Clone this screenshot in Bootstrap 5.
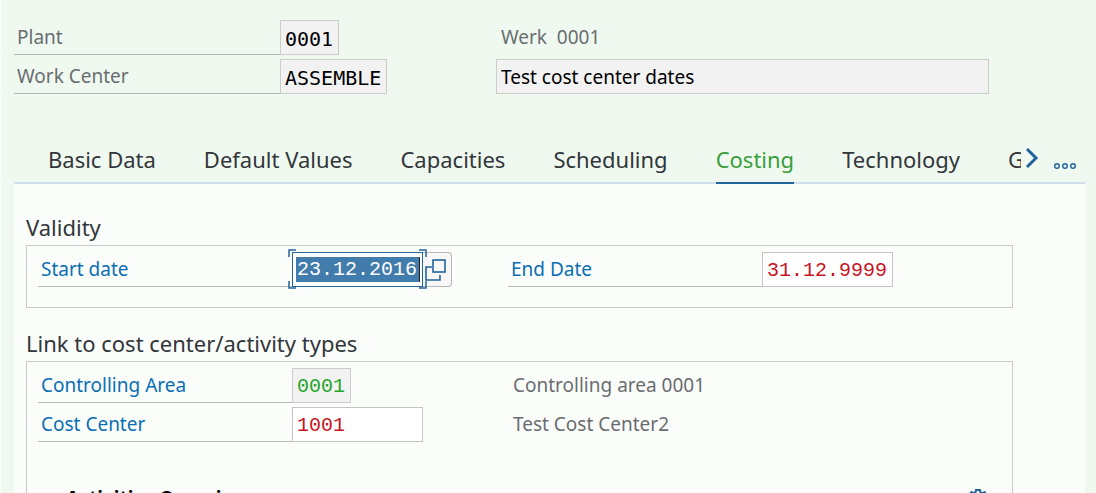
<!DOCTYPE html>
<html lang="en">
<head>
<meta charset="utf-8">
<meta name="viewport" content="width=device-width, initial-scale=1">
<title>Work Center: Costing</title>
<link href="https://cdn.jsdelivr.net/npm/bootstrap@5.3.0/dist/css/bootstrap.min.css" rel="stylesheet">
<style>
  body { background: #eff9f0; font-family: "Noto Sans", sans-serif; font-size: 19px; line-height: 24px; color: #32363a; border-left: 1px solid #fbfdfb; }
  .page { padding: 20px 11px 0 13px; }
  .form-row { display: grid; grid-template-columns: 45% 1fr; height: 35px; margin-bottom: 4px; }
  .caption { width: 266px; padding: 0 0 0 3px; line-height: 34px; color: #6a6d70; border-bottom: 1px solid #b5b8b5; flex: none; white-space: nowrap; }
  .note { line-height: 34px; color: #6a6d70; padding-left: 5px; white-space: pre; }
  .field { height: 35px; padding: 2px 4px 0; border: 1px solid #c4c6c4; border-radius: 0; background: #fff; color: #000; outline: 0; min-width: 0; }
  .mono { font-family: "Liberation Mono", monospace; font-size: 20px; }
  .key { font-family: "DejaVu Sans Mono", monospace; }
  .locked { background: #f2f2f2; border-color: #cbcdcb; }
  .w4 { width: 59px; } .w8 { width: 107px; } .w10 { width: 131px; }
  .desc { width: 493px; max-width: 100%; padding-bottom: 2px; }
  .red { color: #c8141e; } .green { color: #22a52a; }

  .tabs { margin-top: 42px; height: 44px; border-bottom: 2px solid #cfdff0; }
  .tab-list { gap: 48px; padding-left: 34px; width: 1007px; overflow: hidden; height: 44px; }
  .tab { border: 0; border-bottom: 2px solid transparent; background: none; padding: 0; height: 44px; font-size: 22px; line-height: 30px; padding-bottom: 4px; color: #32363a; flex: none; }
  .tab.active { color: #3a9e3c; border-color: #22649b; }
  .last-tab { width: 13px; overflow: hidden; text-align: left; }
  .icon-btn { border: 0; background: none; padding: 0; display: flex; }
  .panel { background: #fbfdfb; padding: 29px 72px 0 12px; flex: 1; }
  .group-title { font-size: 22px; line-height: 28px; margin: 0 0 4px; font-weight: 400; }
  .next-title { margin-top: 21px; }
  .group-box { border: 1px solid #c9cbc9; padding: 6px 10px 0 11px; }
  .group-box .form-row { grid-template-columns: 470px 1fr; }
  .group-box .caption { width: 254px; color: #0a6eb4; }
  .focus-frame { position: relative; }
  .focus-frame .field { border: 1px solid #22649b; }
  .corners { position: absolute; left: -4px; top: -3px; pointer-events: none; }
  .chosen { display: flex; align-items: center; padding: 0 3px; }
  .chosen input { width: 124px; height: 25px; border: 0; padding: 0 0 0 1px; background: #427cac; color: #fff; outline: 0; border-radius: 0; border-right: 1px solid #222; }
  .help { width: 29px; height: 35px; border: 1px solid #b5b8b5; border-left: 0; border-radius: 0 4px 4px 0; background: #f7f7f7; padding: 0; }
  .overview-bar { padding: 38px 13px 0 28px; }
  .overview { font-size: 19px; line-height: 28px; font-weight: 700; color: #000; margin: 0; }
</style>
</head>
<body class="vh-100 overflow-hidden">
<main class="page d-flex flex-column h-100">
  <div class="form-row">
    <div class="d-flex"><label class="caption" for="plant">Plant</label><input id="plant" class="field mono key locked w4" value="0001" readonly></div>
    <div class="note">Werk  0001</div>
  </div>
  <div class="form-row">
    <div class="d-flex"><label class="caption" for="wc">Work Center</label><input id="wc" class="field mono key locked w8" value="ASSEMBLE" readonly></div>
    <div><input class="field locked desc" aria-label="Description" value="Test cost center dates" readonly></div>
  </div>

  <div class="tabs d-flex flex-shrink-0">
    <div class="tab-list d-flex" role="tablist">
      <button class="tab" role="tab">Basic Data</button>
      <button class="tab" role="tab">Default Values</button>
      <button class="tab" role="tab">Capacities</button>
      <button class="tab" role="tab">Scheduling</button>
      <button class="tab active" role="tab" aria-selected="true">Costing</button>
      <button class="tab" role="tab">Technology</button>
      <button class="tab last-tab" role="tab">G</button>
    </div>
    <button class="icon-btn" aria-label="Next tabs"><svg width="22" height="40" viewBox="0 0 22 40" fill="none" stroke="#22649b" stroke-width="3"><path d="M6 9l9 9-9 9"/></svg></button>
    <button class="icon-btn ms-auto" aria-label="All tabs"><svg width="34" height="40" viewBox="0 0 34 40" fill="none" stroke="#22649b" stroke-width="1.4"><circle cx="6" cy="26" r="2.3"/><circle cx="14" cy="26" r="2.3"/><circle cx="22" cy="26" r="2.3"/></svg></button>
  </div>

  <div class="panel">
    <h2 class="group-title">Validity</h2>
    <div class="group-box pb-3">
      <div class="form-row">
        <div class="d-flex"><label class="caption" for="start">Start date</label>
          <div class="focus-frame d-flex">
            <div class="field chosen w10"><input id="start" class="mono" value="23.12.2016"></div>
            <svg class="corners" width="140" height="41" fill="none" stroke="#22649b" stroke-width="1.5"><path d="M8 1H1V8M131 1H138V8M8 39H1V32M131 39H138V32"/></svg>
          </div>
          <button class="help" aria-label="Value help"><svg width="28" height="33" viewBox="0 0 28 33" fill="none" stroke="#22649b" stroke-width="1.6"><rect x="10" y="7" width="12" height="12"/><path d="M9 14H3V27H17V22"/></svg></button>
        </div>
        <div class="d-flex"><label class="caption" for="end">End Date</label><input id="end" class="field mono red w10" value="31.12.9999"></div>
      </div>
    </div>
    <h2 class="group-title next-title">Link to cost center/activity types</h2>
    <div class="group-box">
      <div class="form-row">
        <div class="d-flex"><label class="caption" for="area">Controlling Area</label><input id="area" class="field mono locked green w4" value="0001" readonly></div>
        <div class="note">Controlling area 0001</div>
      </div>
      <div class="form-row">
        <div class="d-flex"><label class="caption" for="cc">Cost Center</label><input id="cc" class="field mono red w10" value="1001"></div>
        <div class="note">Test Cost Center2</div>
      </div>
      <div class="overview-bar d-flex justify-content-between">
        <h3 class="overview">Activities Overview</h3>
        <button class="icon-btn pt-1" aria-label="Settings"><svg width="22" height="22" viewBox="0 0 22 22" fill="none" stroke="#22649b" stroke-width="2"><circle cx="11" cy="11" r="3"/><path d="M9 2h4l.5 2.500 2 .8 2-1.300 2 2.500-1.500 2 .8 2v2l-.8 2 1.500 2-2 2.500-2-1.300-2 .8-.5 2.500H9l-.5-2.500-2-.8-2 1.300-2-2.500 1.500-2-.8-2v-2l.8-2-1.500-2 2-2.500 2 1.300 2-.8z"/></svg></button>
      </div>
    </div>
  </div>
</main>
<script src="https://cdn.jsdelivr.net/npm/bootstrap@5.3.0/dist/js/bootstrap.bundle.min.js"></script>
</body>
</html>
